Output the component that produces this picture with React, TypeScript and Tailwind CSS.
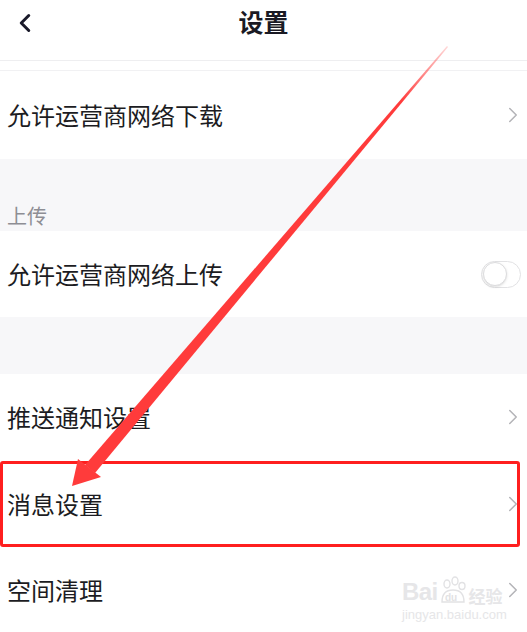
import { ChevronLeft, ChevronRight } from 'lucide-react';

const font = { fontFamily: '"Noto Sans CJK SC", "Noto Sans", sans-serif' };

function Row({ label, right, className = '' }: { label: string; right?: 'chevron' | 'toggle'; className?: string }) {
  return (
    <div className={`flex items-center justify-between bg-white pl-[7px] pr-[1px] ${className}`}>
      <span className="text-[24px] leading-none text-[#1c1c22]">{label}</span>
      {right === 'chevron' && <ChevronRight className="h-[26px] w-[26px] text-[#b4b4b8]" strokeWidth={1.4} />}
      {right === 'toggle' && (
        <div className="mr-[5px] flex h-[27px] w-[40px] items-center rounded-full border border-[#e2e2e4] bg-white p-[1px]">
          <div className="h-[24px] w-[24px] rounded-full border border-[#dcdcde] bg-white shadow-sm" />
        </div>
      )}
    </div>
  );
}

export default function App() {
  return (
    <div className="relative h-[632px] w-[527px] overflow-hidden bg-white" style={font}>
      {/* Header */}
      <div className="relative flex h-[61px] items-center justify-center border-b border-[#eeeef0]">
        <ChevronLeft className="absolute left-[10px] top-[8px] h-[30px] w-[30px] text-[#1a1a2a]" strokeWidth={2.4} />
        <h1 className="-mt-[16px] text-[25px] font-bold text-[#1a1a24]">设置</h1>
      </div>
      <div className="h-[10px] border-b border-[#f1f1f3]" />

      <Row label="允许运营商网络下载" right="chevron" className="h-[88px]" />

      <div className="flex h-[72px] items-end bg-[#f7f7f9] pb-[5px] pl-[7px]">
        <span className="text-[20px] leading-none text-[#8e8e94]">上传</span>
      </div>

      <Row label="允许运营商网络上传" right="toggle" className="h-[86px]" />

      <div className="h-[57px] bg-[#f7f7f9]" />

      <Row label="推送通知设置" right="chevron" className="h-[86px]" />

      <div className="relative">
        <Row label="消息设置" right="chevron" className="h-[87px]" />
        <div className="absolute left-0 top-[1px] h-[86px] w-[520px] rounded-[3px] border-[3px] border-[#ff1f1f]" />
      </div>

      <Row label="空间清理" right="chevron" className="h-[86px]" />

      {/* Watermark */}
      <div className="absolute left-[402px] top-[576px] flex flex-col items-start text-[#e6e6e8]">
        <div className="flex items-end">
          <span className="text-[24px] font-bold leading-none tracking-tight" style={{ fontFamily: '"Liberation Sans", sans-serif' }}>Bai</span>
          <svg width="30" height="30" viewBox="0 0 30 30" className="-mb-[2px]">
            <g fill="none" stroke="#e2e2e4" strokeWidth="1.4">
              <ellipse cx="9" cy="8" rx="3" ry="4" />
              <ellipse cx="17" cy="5" rx="3" ry="4" />
              <ellipse cx="24" cy="10" rx="3" ry="3.5" />
              <path d="M4 26 Q4 14 15 14 Q26 14 26 26 Z" />
            </g>
            <text x="7" y="25" fontSize="10" fill="#e2e2e4" fontWeight="700" fontFamily="Liberation Sans, sans-serif">du</text>
          </svg>
          <span className="ml-[1px] text-[17px] font-bold leading-none">经验</span>
        </div>
        <span className="mt-[4px] text-[13px] leading-none" style={{ fontFamily: '"Liberation Sans", sans-serif' }}>
          jingyan.baidu.com
        </span>
      </div>

      {/* Red arrow */}
      <svg className="pointer-events-none absolute left-0 top-0" width="527" height="632" viewBox="0 0 527 632">
        <defs>
          <linearGradient id="fade" x1="447" y1="46" x2="400" y2="100" gradientUnits="userSpaceOnUse">
            <stop offset="0" stopColor="#ff3b3b" stopOpacity="0.2" />
            <stop offset="1" stopColor="#ff3b3b" stopOpacity="1" />
          </linearGradient>
        </defs>
        <polygon points="447,46 448,47 95,473 85,465" fill="url(#fade)" />
        <polygon points="72,486 78,459 101,477" fill="#ff3b3b" />
      </svg>
    </div>
  );
}
